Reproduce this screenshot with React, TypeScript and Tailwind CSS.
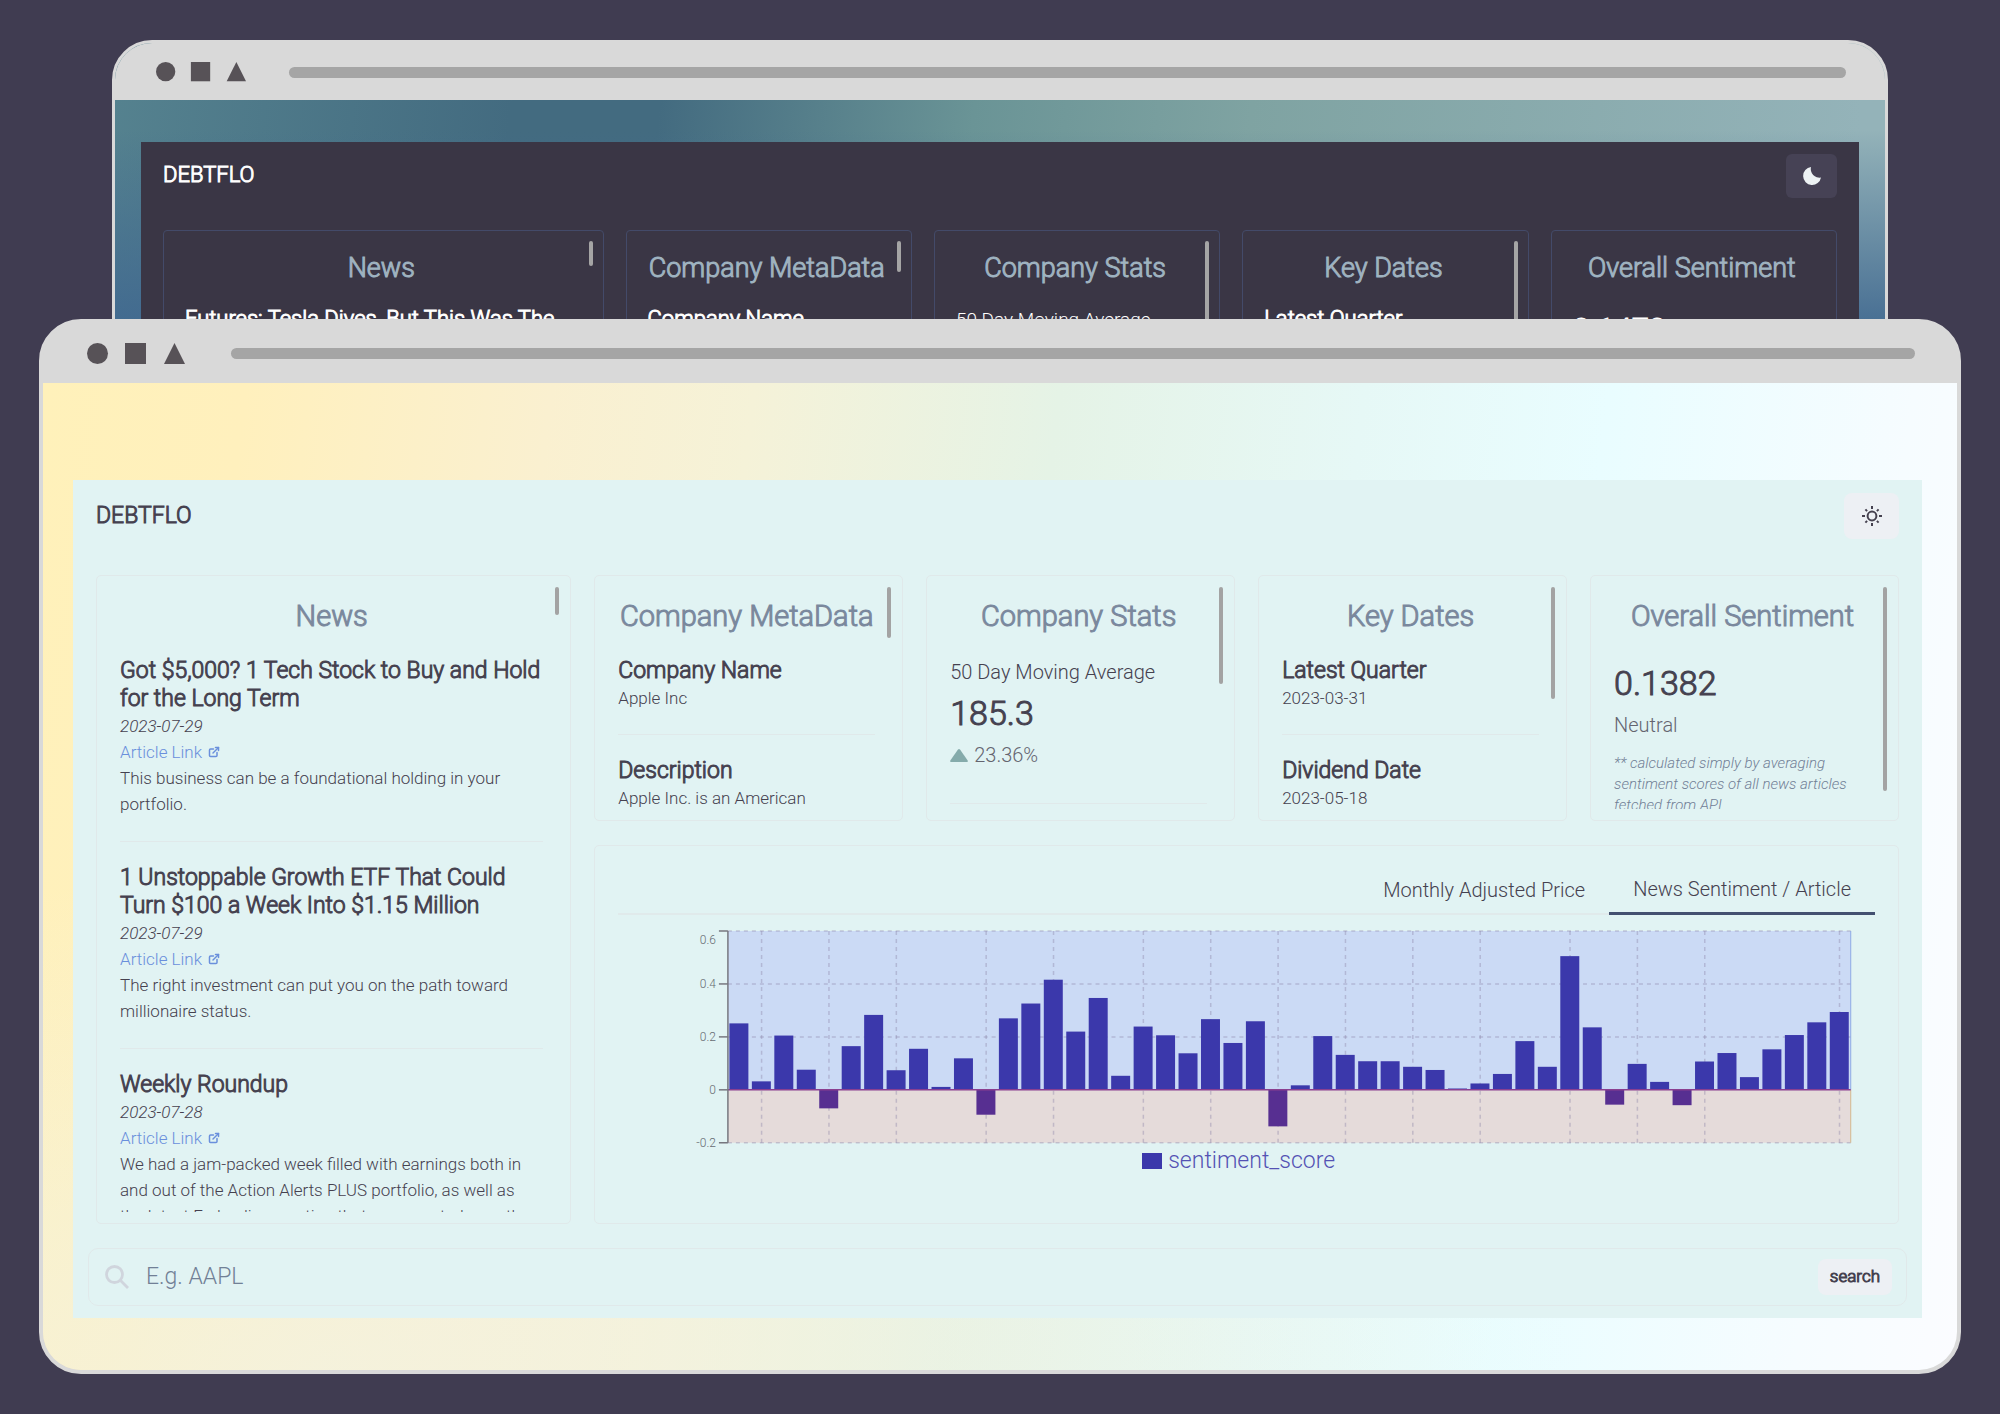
import { ReactNode } from "react";
import { FiExternalLink } from "react-icons/fi";

const articles = [
  {
    title: "Got $5,000? 1 Tech Stock to Buy and Hold for the Long Term",
    date: "2023-07-29",
    summary: "This business can be a foundational holding in your portfolio.",
  },
  {
    title: "1 Unstoppable Growth ETF That Could Turn $100 a Week Into $1.15 Million",
    date: "2023-07-29",
    summary: "The right investment can put you on the path toward millionaire status.",
  },
  {
    title: "Weekly Roundup",
    date: "2023-07-28",
    summary:
      "We had a jam-packed week filled with earnings both in and out of the Action Alerts PLUS portfolio, as well as the latest Fed policy meeting that, as expected, saw the",
  },
];

const scores = [
  0.251, 0.032, 0.205, 0.076, -0.07, 0.165, 0.283, 0.074, 0.155, 0.011, 0.119,
  -0.094, 0.27, 0.326, 0.416, 0.22, 0.347, 0.053, 0.239, 0.206, 0.138, 0.267,
  0.177, 0.259, -0.138, 0.017, 0.203, 0.132, 0.108, 0.108, 0.087, 0.075, 0.005,
  0.024, 0.06, 0.184, 0.087, 0.505, 0.236, -0.056, 0.098, 0.03, -0.058, 0.107,
  0.139, 0.048, 0.153, 0.207, 0.255, 0.294,
];

const gridColumns = [1, 4, 7, 11, 14, 18, 21, 24, 27, 30, 33, 37, 40, 43, 49];
const yTicks = [0.6, 0.4, 0.2, 0, -0.2];

const PLOT = { left: 110, right: 1234, top: 6, bottom: 218 };
const STEP = (PLOT.right - PLOT.left) / scores.length;
const toY = (v: number) =>
  PLOT.top + ((0.6 - v) / 0.8) * (PLOT.bottom - PLOT.top);

function MoonIcon() {
  return (
    <svg width="18" height="18" viewBox="0 0 18 18" fill="#edf2f4">
      <path d="M8 0A9 9 0 1 0 18 10.5A8.700 8.700 0 0 1 8 0z" />
    </svg>
  );
}

function SunIcon() {
  return (
    <svg width="20" height="20" viewBox="0 0 20 20" fill="none" stroke="currentColor" strokeWidth="2">
      <circle cx="10" cy="10" r="4.4" />
      <path d="M10 0v3M10 17v3M0 10h3M17 10h3M3.400 3.400l1.700 1.700M14.900 14.900l1.700 1.700M3.400 16.600l1.700-1.700M14.900 5.100l1.700-1.700" />
    </svg>
  );
}

function TitleBar({ back }: { back?: boolean }) {
  return (
    <div
      className={
        back
          ? "flex h-[60px] items-center bg-[#d9d9d9] pt-2 pr-[39px] pb-1 pl-[41px]"
          : "flex h-[60px] items-center bg-[#d9d9d9] pr-[42px] pl-11"
      }
    >
      <svg
        className={back ? "w-[90px] shrink-0" : "w-[98px] shrink-0"}
        viewBox="0 0 98 21"
        fill="#575257"
      >
        <circle cx="10.5" cy="10.5" r="10.5" />
        <rect x="38" width="21" height="21" />
        <path d="M87.500 0L98 21H77z" />
      </svg>
      <div
        className={
          back
            ? "ml-[43px] h-[11px] flex-1 rounded-full bg-[#a5a5a5]"
            : "ml-[46px] h-[11px] flex-1 rounded-full bg-[#a5a5a5]"
        }
      />
    </div>
  );
}

function DarkCard({
  title,
  thumb,
  children,
}: {
  title: string;
  thumb?: string;
  children: ReactNode;
}) {
  return (
    <section className="relative h-60 overflow-hidden rounded-sm border border-[#434a69] px-[21px] pt-[21px]">
      <h2 className="mb-[22px] pr-1 text-center text-[27px] leading-8 font-light whitespace-nowrap text-[#9fb3c0] [-webkit-text-stroke:1px]">
        {title}
      </h2>
      {children}
      {thumb && (
        <div className={`absolute top-[10px] right-[10px] w-1 rounded-full bg-[#a5a5a5] ${thumb}`} />
      )}
    </section>
  );
}

function DarkHeading({ children }: { children: ReactNode }) {
  return (
    <h3 className="text-[22px] leading-[26px] font-light whitespace-nowrap [-webkit-text-stroke:1px]">
      {children}
    </h3>
  );
}

function BackWindow() {
  return (
    <div className="mx-[112px] h-[700px] overflow-hidden rounded-t-[40px] border-[3px] border-[#d9d9d9] bg-[linear-gradient(180deg,#41699000_0,#41699000_90px,#416990_300px),linear-gradient(96deg,#55828f_0%,#436b80_22%,#436b80_30%,#6a9496_47%,#7fa3a2_62%,#94b3b9_95%)] bg-origin-border">
      <div className="-mt-[3px]">
        <TitleBar back />
      </div>
      <div className="mx-[26px] mt-[42px] h-[600px] bg-[#3a3645] px-[22px] pt-3 text-white">
        <header className="mb-8 flex h-11 items-start justify-between">
          <h1 className="pt-[9px] text-[22px] leading-6 font-light [-webkit-text-stroke:1px]">DEBTFLO</h1>
          <button
            aria-label="Switch to light mode"
            className="flex h-11 w-[51px] items-center justify-center rounded-md bg-[#464255]"
          >
            <MoonIcon />
          </button>
        </header>
        <div className="grid grid-cols-[20fr_13fr_13fr_13fr_13fr] gap-[22px]">
          <DarkCard title="News" thumb="h-[25px]">
            <DarkHeading>Futures: Tesla Dives, But This Was The</DarkHeading>
          </DarkCard>
          <DarkCard title="Company MetaData" thumb="h-[31px]">
            <DarkHeading>Company Name</DarkHeading>
          </DarkCard>
          <DarkCard title="Company Stats" thumb="h-[90px]">
            <p className="text-[19px] leading-7 font-light">50 Day Moving Average</p>
          </DarkCard>
          <DarkCard title="Key Dates" thumb="h-[100px]">
            <DarkHeading>Latest Quarter</DarkHeading>
          </DarkCard>
          <DarkCard title="Overall Sentiment">
            <p className="pt-1 text-[31px] leading-10 font-light [-webkit-text-stroke:1px]">0.1472</p>
          </DarkCard>
        </div>
      </div>
    </div>
  );
}

function Card({
  title,
  thumb,
  className = "",
  children,
}: {
  title: string;
  thumb: string;
  className?: string;
  children: ReactNode;
}) {
  return (
    <section className={`relative rounded-[5px] border border-[#e0e9ea] p-[11px] ${className}`}>
      <div className="h-full overflow-hidden pt-3 pr-4 pl-3">
        <h2 className="mb-6 text-center text-[29px] leading-[34px] font-light whitespace-nowrap text-[#7a889d] [-webkit-text-stroke:1px]">
          {title}
        </h2>
        {children}
      </div>
      <div className={`absolute top-[11px] right-[11px] w-1 rounded-full bg-[#a3a3a3] ${thumb}`} />
    </section>
  );
}

function ItemHeading({ children }: { children: ReactNode }) {
  return (
    <h3 className="text-[23px] leading-7 font-light text-[#45414f] [-webkit-text-stroke:1px]">
      {children}
    </h3>
  );
}

function Fact({ label, value }: { label: string; value: string }) {
  return (
    <div className="mb-[22px] border-b border-[#e0e9ea] pb-[23px]">
      <ItemHeading>{label}</ItemHeading>
      <p className="text-[17px] leading-[26px] font-light">{value}</p>
    </div>
  );
}

function SentimentChart() {
  return (
    <svg
      viewBox="0 0 1258 224"
      className="block w-full overflow-visible"
      role="img"
      aria-label="News sentiment per article"
    >
      <rect x={PLOT.left} y={PLOT.top} width={PLOT.right - PLOT.left} height={toY(0) - PLOT.top} fill="#cbdaf5" />
      <rect x={PLOT.left} y={toY(0)} width={PLOT.right - PLOT.left} height={PLOT.bottom - toY(0)} fill="#e5dbda" />
      <g stroke="#8d84a8" strokeOpacity="0.4" strokeWidth="1.5" strokeDasharray="4 4">
        {[0.6, 0.4, 0.2, -0.2].map((v) => (
          <line key={v} x1={PLOT.left} x2={PLOT.right} y1={toY(v)} y2={toY(v)} />
        ))}
        {gridColumns.map((i) => (
          <line
            key={i}
            x1={PLOT.left + STEP * (i + 0.5)}
            x2={PLOT.left + STEP * (i + 0.5)}
            y1={PLOT.top}
            y2={PLOT.bottom}
          />
        ))}
      </g>
      <line x1={PLOT.right} x2={PLOT.right} y1={PLOT.top} y2={toY(0)} stroke="#8fabe6" />
      <line x1={PLOT.right} x2={PLOT.right} y1={toY(0)} y2={PLOT.bottom} stroke="#d5b98f" />
      {scores.map((v, i) => (
        <rect
          key={i}
          x={PLOT.left + STEP * i + 1.5}
          y={v < 0 ? toY(0) : toY(v)}
          width={19}
          height={Math.abs(toY(v) - toY(0))}
          fill={v < 0 ? "#572f91" : "#3b38ab"}
        />
      ))}
      <line x1={PLOT.left} x2={PLOT.right} y1={toY(0)} y2={toY(0)} stroke="#8a3f90" strokeWidth="1.5" />
      <line x1={PLOT.left} x2={PLOT.left} y1={PLOT.top} y2={PLOT.bottom} stroke="#77777f" strokeWidth="1.5" />
      {yTicks.map((v) => (
        <g key={v}>
          <line x1={PLOT.left - 9} x2={PLOT.left} y1={toY(v)} y2={toY(v)} stroke="#77777f" strokeWidth="1.5" />
          <text
            x={PLOT.left - 12}
            y={v === 0.6 ? toY(v) + 13 : toY(v) + 4}
            textAnchor="end"
            fontSize="12"
            fontWeight="300"
            fill="#666b72"
          >
            {v}
          </text>
        </g>
      ))}
    </svg>
  );
}

function FrontWindow() {
  return (
    <div className="relative mx-[39px] -mt-[421px] overflow-hidden rounded-[42px] border-4 border-[#d9d9d9] bg-[#d9d9d9] text-[#45414f]">
      <TitleBar />
      <div className="bg-[radial-gradient(ellipse_65%_50%_at_15%_100%,#f3f2e0cc,#f3f2e000),linear-gradient(97deg,#fff1ba_0%,#fff0bd_10%,#faf0d0_25%,#f5f2d8_35%,#e5f3e6_50%,#e6f8f6_65%,#e9fdff_77%,#f6fcff_92%,#fbfcff_100%)] pt-[97px] pr-[35px] pb-[52px] pl-[30px]">
        <main className="bg-[#e1f3f3] px-[15px] pt-[13px] pb-3">
          <header className="mx-2 mb-9 flex h-[46px] items-start justify-between">
            <h1 className="pt-[9px] text-[23px] leading-7 font-light [-webkit-text-stroke:1px]">DEBTFLO</h1>
            <button
              aria-label="Switch to dark mode"
              className="flex h-[46px] w-[55px] items-center justify-center rounded-lg bg-[#edf0f4]"
            >
              <SunIcon />
            </button>
          </header>

          <div className="mx-2 grid grid-cols-[20fr_13fr_13fr_13fr_13fr] grid-rows-[246px_379px] gap-x-[23px] gap-y-6">
            <Card title="News" thumb="h-7" className="row-span-2">
              {articles.map((a) => (
                <article key={a.title} className="mb-[22px] border-b border-[#e0e9ea] pb-6">
                  <ItemHeading>{a.title}</ItemHeading>
                  <p className="text-[17px] leading-[26px] font-light italic">{a.date}</p>
                  <a href="#" className="flex items-center gap-[6px] text-[17px] leading-[26px] font-light text-[#6a8fdc]">
                    Article Link <FiExternalLink size={12} strokeWidth={3} />
                  </a>
                  <p className="pr-1 text-[17px] leading-[26px] font-light">{a.summary}</p>
                </article>
              ))}
            </Card>
            <Card title="Company MetaData" thumb="h-[51px]">
              <Fact label="Company Name" value="Apple Inc" />
              <Fact label="Description" value="Apple Inc. is an American" />
            </Card>
            <Card title="Company Stats" thumb="h-[97px]">
              <div className="border-b border-[#e0e9ea] pb-8">
                <p className="text-[20px] leading-[30px] font-light">50 Day Moving Average</p>
                <p className="text-[34px] leading-[52px] font-light [-webkit-text-stroke:1px]">185.3</p>
                <p className="flex items-center gap-[6px] text-[20px] leading-8 font-light opacity-80">
                  <svg width="18" height="13" viewBox="0 0 18 13" fill="#6f9a9a">
                    <path d="M8 .6Q9-.5 10 .6L17.700 11.500Q18.300 13 17 13H1Q-.3 13 .3 11.500z" />
                  </svg>
                  23.36%
                </p>
              </div>
            </Card>
            <Card title="Key Dates" thumb="h-28">
              <Fact label="Latest Quarter" value="2023-03-31" />
              <Fact label="Dividend Date" value="2023-05-18" />
            </Card>
            <Card title="Overall Sentiment" thumb="h-[204px]">
              <p className="text-[34px] leading-[52px] font-light [-webkit-text-stroke:1px]">0.1382</p>
              <p className="mb-3 text-[20px] leading-8 font-light opacity-80">Neutral</p>
              <p className="text-[15px] leading-[21px] font-light text-[#718096] italic">
                ** calculated simply by averaging sentiment scores of all news articles fetched from API
              </p>
            </Card>

            <section className="col-span-4 rounded-[5px] border border-[#e0e9ea] px-[23px] pt-6">
              <div role="tablist" className="mb-[10px] flex justify-end border-b-2 border-[#e0eaeb] text-[20px] font-light">
                <button role="tab" aria-selected="false" className="px-6 pt-1 pb-2">
                  Monthly Adjusted Price
                </button>
                <button
                  role="tab"
                  aria-selected="true"
                  className="-mb-[2px] border-b-[3px] border-[#435070] px-6 pt-1 pb-2"
                >
                  News Sentiment / Article
                </button>
              </div>
              <SentimentChart />
              <p className="flex items-center justify-center gap-[6px] pr-4 text-[23px] leading-6 font-light text-[#5452b4]">
                <span className="h-4 w-5 bg-[#3b38ab]" />
                sentiment_score
              </p>
            </section>
          </div>

          <form className="mt-6 flex h-[58px] items-center rounded-[10px] border border-[#e0e9ea] pr-[14px] pl-4">
            <svg width="24" height="24" viewBox="0 0 24 24" fill="none" stroke="#d0d5dd" strokeWidth="2.8">
              <circle cx="9.5" cy="9.5" r="8" />
              <path d="M15.300 15.300L23 23" />
            </svg>
            <input
              aria-label="Ticker symbol"
              placeholder="E.g. AAPL"
              className="ml-[17px] flex-1 text-[23px] font-light outline-none placeholder:text-[#718096]"
            />
            <button
              type="button"
              className="h-9 rounded-lg bg-[#edf0f4] px-3 text-[17px] font-light [-webkit-text-stroke:1px]"
            >
              search
            </button>
          </form>
        </main>
      </div>
    </div>
  );
}

export default function App() {
  return (
    <div className="min-h-screen bg-[#403c51] pt-10 pb-10 font-[Roboto,sans-serif]">
      <BackWindow />
      <FrontWindow />
    </div>
  );
}
